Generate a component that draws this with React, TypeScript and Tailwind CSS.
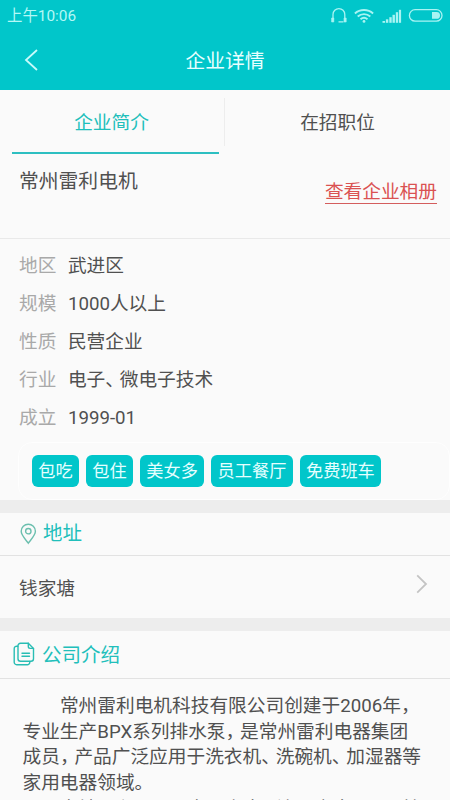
import React from "react";

const info: [string, React.ReactNode][] = [
  ["地区", "武进区"],
  ["规模", "1000人以上"],
  ["性质", "民营企业"],
  ["行业", <>电子<Mark>、</Mark>微电子技术</>],
  ["成立", "1999-01"],
];

const tags = ["包吃", "包住", "美女多", "员工餐厅", "免费班车"];

function Mark({ children }: { children: React.ReactNode }) {
  return <span className="tracking-[-4.2px]">{children}</span>;
}

function StatusIcons() {
  return (
    <svg width="116" height="20" viewBox="0 0 116 20" fill="none" stroke="#a9f4f3" strokeWidth="1.3">
      <path d="M3 15.500V9.500a5.900 5.900 0 0 1 11.800 0V15.500M8.500 16.800h5" />
      <path d="M1.600 13h2.200v4H1.600zM14 13h2.200v4H14z" fill="#a9f4f3" strokeWidth="0.6" />
      <g strokeWidth="1.9">
        <path d="M24.900 8.500a13.500 13.500 0 0 1 18.200 0" />
        <path d="M27.700 11.500a9.500 9.500 0 0 1 12.600 0" />
        <path d="M30.500 14.300a5.500 5.500 0 0 1 7 0" />
      </g>
      <circle cx="34" cy="16.400" r="1.400" fill="#a9f4f3" stroke="none" />
      <g fill="#a9f4f3" stroke="none">
        <rect x="52.500" y="16" width="2.600" height="1.800" />
        <rect x="55.900" y="14.300" width="2.400" height="3.500" />
        <rect x="59.300" y="12.200" width="2.400" height="5.600" />
        <rect x="62.500" y="9.800" width="2.400" height="8" />
        <rect x="65.800" y="7.200" width="2.300" height="10.600" />
        <rect x="68.900" y="4.800" width="2.200" height="13" />
      </g>
      <rect x="79.400" y="4.700" width="32.600" height="11.400" rx="5.700" />
      <path d="M102 7h4.600a3.400 3.400 0 0 1 0 6.800H102z" fill="#a9f4f3" stroke="none" />
    </svg>
  );
}

export default function App() {
  return (
    <div className="flex h-[800px] w-[450px] flex-col overflow-hidden bg-[#fafafa] font-[Roboto,'Noto_Sans_CJK_SC',sans-serif] text-[18.7px] text-[#505050]">
      <header className="h-[90px] shrink-0 bg-[#01c6ca]">
        <div className="flex h-[31px] items-start justify-between pl-[7px] pr-1 pt-[5px] text-[15.4px] leading-[22px] text-[#b4f8f6]">
          <span>上午10:06</span>
          <StatusIcons />
        </div>
        <div className="grid h-[59px] grid-cols-[1fr_auto_1fr] items-center text-[19.8px] text-[#e8ffff]">
          <svg className="-mt-0.5 ml-6" width="15" height="22" viewBox="0 0 15 22" fill="none" stroke="#c8fbfb" strokeWidth="1.8">
            <path d="M13 1 2 11l11 10" />
          </svg>
          <h1 className="pt-0.5 leading-[58px]">企业详情</h1>
        </div>
      </header>

      <nav className="flex h-16 shrink-0 text-center leading-[66px]">
        <div className="ml-3 mr-[5px] h-16 w-[207px] border-b-2 border-[#2dbfc1] pr-2 text-[#21bfbb]">企业简介</div>
        <div className="mt-2 h-12 w-px bg-[#ededed]" />
        <div className="flex-1">在招职位</div>
      </nav>

      <section className="flex h-[85px] shrink-0 justify-between border-b border-[#e9e9e9] pl-[19px] pr-[13px]">
        <h2 className="pt-[14px] text-[19.8px] leading-7">常州雷利电机</h2>
        <a className="mt-6 h-[26px] border-b border-[#d45d5d] leading-[28px] text-[#da5252]">查看企业相册</a>
      </section>

      <dl className="shrink-0 pt-[8px]">
        {info.map(([label, value]) => (
          <div key={label} className="flex h-[38.1px] gap-[11.500px] pl-[19px] leading-[39px]">
            <dt className="text-[#a9a9a9]">{label}</dt>
            <dd>{value}</dd>
          </div>
        ))}
      </dl>

      <div className="ml-[18px] mt-[4.5px] flex h-[58px] shrink-0 gap-[7.3px] rounded-[14px] border border-[#fefefe] pl-[13px] pt-3">
        {tags.map((tag) => (
          <span key={tag} className="h-8 rounded-[6px] bg-[#01c6ca] px-[6.2px] text-[17.200px] leading-[33px] text-[#e5ffff]">
            {tag}
          </span>
        ))}
      </div>

      <div className="h-[13px] shrink-0 bg-[#ededed]" />

      <section className="shrink-0">
        <div className="flex h-[43px] items-center border-b border-[#e2e2e2] pl-5 text-[19.5px] text-[#21bfbb]">
          <svg width="17" height="22" viewBox="0 0 17 22" fill="none" stroke="#6bbfae" strokeWidth="1.4">
            <path d="M8.3 20.2C6.5 17.5 1.2 12.5 1.2 8.3a7.1 7.1 0 0 1 14.2 0c0 4.2-5.3 9.2-7.1 11.9z" />
            <circle cx="8.3" cy="8.2" r="2.7" />
          </svg>
          <h3 className="ml-1.5 pt-px leading-10">地址</h3>
        </div>
        <div className="flex h-[62px] items-center justify-between pl-[19px] pr-[22px]">
          <span className="pt-[5px]">钱家塘</span>
          <svg className="-mt-1.5" width="12" height="20" viewBox="0 0 12 20" fill="none" stroke="#c4c4c4" strokeWidth="1.8">
            <path d="M1.2 1.4 10 10l-8.8 8.600" />
          </svg>
        </div>
      </section>

      <div className="h-[13px] shrink-0 bg-[#ededed]" />

      <section className="shrink-0">
        <div className="flex h-12 items-center border-b border-[#e2e2e2] pl-[13px] text-[19.5px] text-[#21bfbb]">
          <svg width="22" height="24" viewBox="0 0 22 24" fill="none" stroke="#29bdb4" strokeWidth="1.4" strokeLinejoin="round" strokeLinecap="round">
            <path d="M7.5 1.2h7.8l5.2 5.2v10.4a2.5 2.5 0 0 1-2.5 2.5H7.5A2.5 2.5 0 0 1 5 16.800V3.700a2.500 2.500 0 0 1 2.500-2.500z" />
            <path d="M15.300 1.200v3.400a1.800 1.800 0 0 0 1.800 1.800h3.400M9 11.200h7.500M9 14.200h7.500M4.800 4.200H4A2.500 2.500 0 0 0 1.200 6.700V20A2.500 2.500 0 0 0 3.700 22.700h10.600a2.500 2.500 0 0 0 2.500-2.500v-.7" />
          </svg>
          <h3 className="ml-[7px] pt-[4px] leading-10">公司介绍</h3>
        </div>
        <div className="whitespace-nowrap pl-[22.5px] pt-[15px] leading-[25.6px]">
          <p className="indent-[2em]">常州雷利电机科技有限公司创建于2006年，</p>
          <p>专业生产BPX系列排水泵<Mark>，</Mark>是常州雷利电器集团</p>
          <p>成员<Mark>，</Mark>产品广泛应用于洗衣机<Mark>、</Mark>洗碗机<Mark>、</Mark>加湿器等</p>
          <p>家用电器领域。</p>
          <p className="pt-px">公司占地面积50000余平方米<Mark>，</Mark>注册资金500万美</p>
        </div>
      </section>
    </div>
  );
}
